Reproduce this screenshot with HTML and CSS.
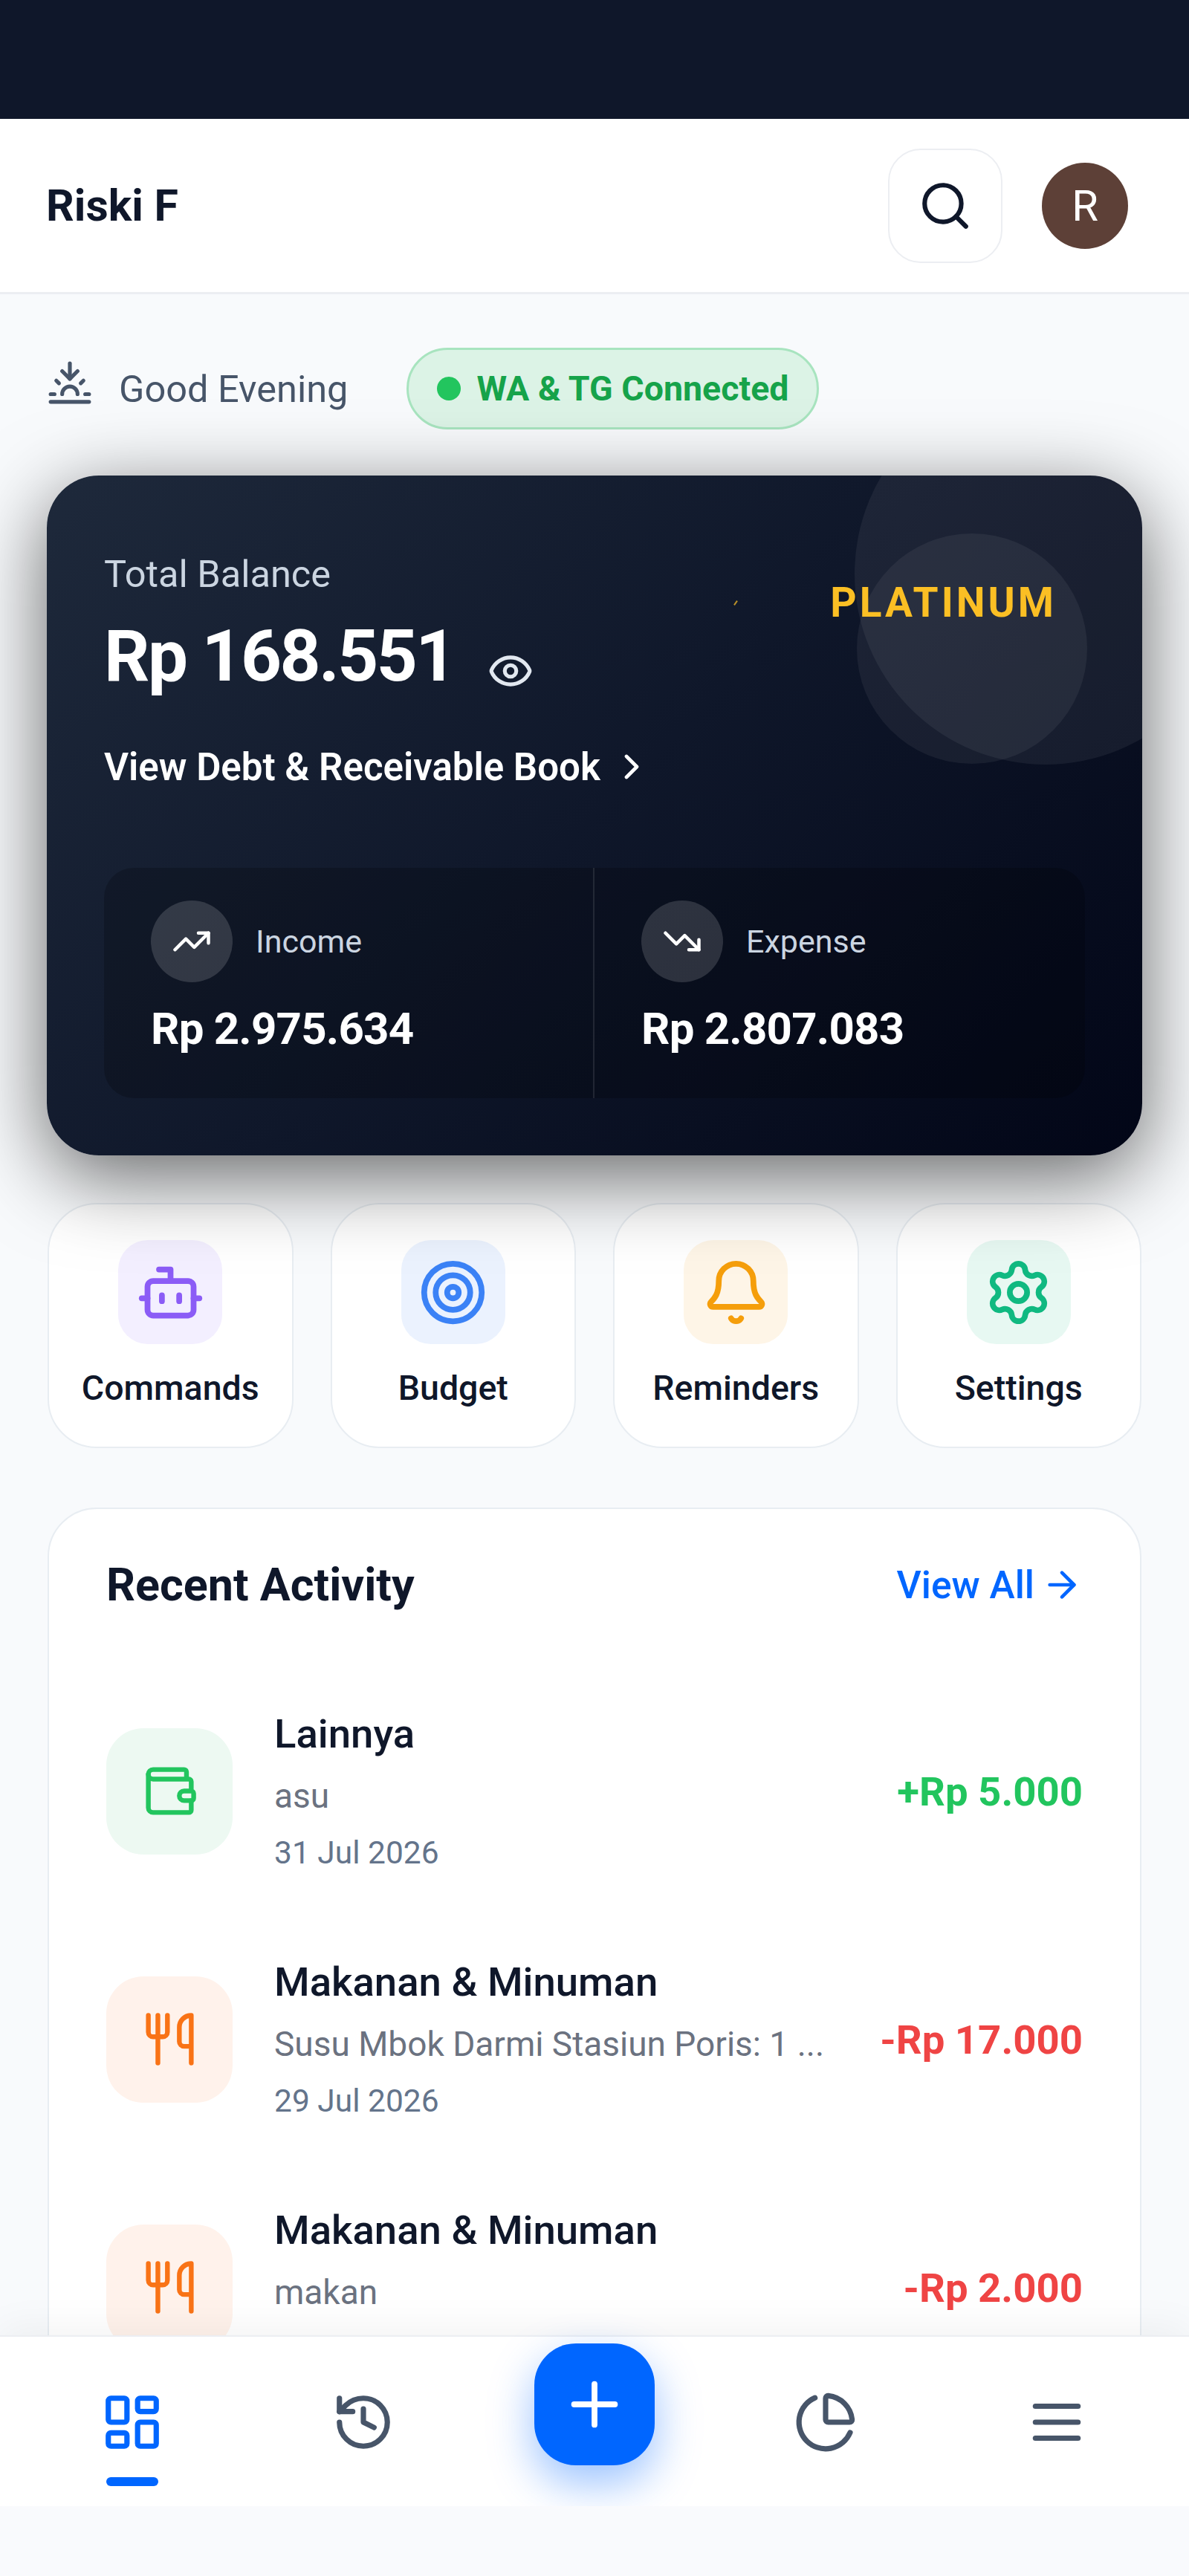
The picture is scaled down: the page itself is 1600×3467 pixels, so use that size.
FILE: index.html
```html
<!DOCTYPE html>
<html lang="en">

<head>
    <meta charset="UTF-8">
    <meta name="viewport" content="width=device-width, initial-scale=1.0">
    <title>Riski F - Dashboard</title>
    <link rel="stylesheet" href="styles.css">
</head>

<body>
    <div class="status-bar"></div>

    <header class="app-header">
        <div class="user-name">Riski F</div>
        <div class="header-right">
            <button class="search-btn">
                <svg class="icon search-icon" viewBox="0 0 24 24"><path d="m21 21-4.34-4.34"/><circle cx="11" cy="11" r="8"/></svg>
            </button>
            <div class="avatar">R</div>
        </div>
    </header>

    <main class="content">
        <div class="greeting">
            <svg class="icon sunset-icon" viewBox="0 0 24 24"><path d="M12 10V2"/><path d="m4.93 10.93 1.41 1.41"/><path d="M2 18h2"/><path d="M20 18h2"/><path d="m19.07 10.93-1.41 1.41"/><path d="M22 22H2"/><path d="m16 6-4 4-4-4"/><path d="M16 18a4 4 0 0 0-8 0"/></svg>
            <span class="greeting-text">Good Evening</span>
            <div class="connected-pill"><span class="dot"></span>WA &amp; TG Connected</div>
        </div>

        <section class="hero">
            <span class="circle circle-big"></span>
            <span class="circle circle-small"></span>
            <span class="speck"></span>

            <div class="hero-top">
                <div>
                    <div class="balance-label">Total Balance</div>
                    <div class="balance-row">
                        <span class="balance">Rp 168.551</span>
                        <svg class="icon eye-icon" viewBox="0 0 24 24"><path d="M2.062 12.348a1 1 0 0 1 0-.696 10.75 10.75 0 0 1 19.876 0 1 1 0 0 1 0 .696 10.75 10.75 0 0 1-19.876 0"/><circle cx="12" cy="12" r="3"/></svg>
                    </div>
                </div>
                <div class="tier">PLATINUM</div>
            </div>

            <div class="debt-link">
                View Debt &amp; Receivable Book
                <svg class="icon chevron-icon" viewBox="0 0 24 24"><path d="m9 18 6-6-6-6"/></svg>
            </div>

            <div class="stats">
                <div class="stat">
                    <div class="stat-head">
                        <span class="stat-icon">
                            <svg class="icon" viewBox="0 0 24 24"><path d="M16 7h6v6"/><path d="m22 7-8.5 8.5-5-5L2 17"/></svg>
                        </span>
                        Income
                    </div>
                    <div class="stat-value">Rp 2.975.634</div>
                </div>
                <div class="stat">
                    <div class="stat-head">
                        <span class="stat-icon">
                            <svg class="icon" viewBox="0 0 24 24"><path d="M16 17h6v-6"/><path d="m22 17-8.5-8.5-5 5L2 7"/></svg>
                        </span>
                        Expense
                    </div>
                    <div class="stat-value">Rp 2.807.083</div>
                </div>
            </div>
        </section>

        <section class="actions">
            <div class="action">
                <span class="action-icon purple">
                    <svg class="icon" viewBox="0 0 24 24"><path d="M12 8V4H8"/><rect width="16" height="12" x="4" y="8" rx="2"/><path d="M2 14h2"/><path d="M20 14h2"/><path d="M15 13v2"/><path d="M9 13v2"/></svg>
                </span>
                Commands
            </div>
            <div class="action">
                <span class="action-icon blue">
                    <svg class="icon" viewBox="0 0 24 24"><circle cx="12" cy="12" r="10"/><circle cx="12" cy="12" r="6"/><circle cx="12" cy="12" r="2"/></svg>
                </span>
                Budget
            </div>
            <div class="action">
                <span class="action-icon amber">
                    <svg class="icon" viewBox="0 0 24 24"><path d="M10.268 21a2 2 0 0 0 3.464 0"/><path d="M3.262 15.326A1 1 0 0 0 4 17h16a1 1 0 0 0 .74-1.673C19.41 13.956 18 12.499 18 8A6 6 0 0 0 6 8c0 4.499-1.411 5.956-2.738 7.326"/></svg>
                </span>
                Reminders
            </div>
            <div class="action">
                <span class="action-icon green">
                    <svg class="icon" viewBox="0 0 24 24"><path d="M9.671 4.136a2.34 2.34 0 0 1 4.659 0 2.34 2.34 0 0 0 3.319 1.915 2.34 2.34 0 0 1 2.33 4.033 2.34 2.34 0 0 0 0 3.831 2.34 2.34 0 0 1-2.33 4.033 2.34 2.34 0 0 0-3.319 1.915 2.34 2.34 0 0 1-4.659 0 2.34 2.34 0 0 0-3.32-1.915 2.34 2.34 0 0 1-2.33-4.033 2.34 2.34 0 0 0 0-3.831A2.34 2.34 0 0 1 6.35 6.051a2.34 2.34 0 0 0 3.319-1.915"/><circle cx="12" cy="12" r="3"/></svg>
                </span>
                Settings
            </div>
        </section>

        <section class="recent">
            <div class="recent-head">
                <h2>Recent Activity</h2>
                <div class="view-all">
                    View All
                    <svg class="icon" viewBox="0 0 24 24"><path d="M5 12h14"/><path d="m12 5 7 7-7 7"/></svg>
                </div>
            </div>

            <div class="tx">
                <span class="tx-icon wallet">
                    <svg class="icon" viewBox="0 0 24 24"><path d="M19 7V4a1 1 0 0 0-1-1H5a2 2 0 0 0 0 4h15a1 1 0 0 1 1 1v4h-3a2 2 0 0 0 0 4h3a1 1 0 0 0 1-1v-2a1 1 0 0 0-1-1"/><path d="M3 5v14a2 2 0 0 0 2 2h15a1 1 0 0 0 1-1v-4"/></svg>
                </span>
                <div class="tx-body">
                    <div class="tx-title">Lainnya</div>
                    <div class="tx-note">asu</div>
                    <div class="tx-date">31 Jul 2026</div>
                </div>
                <div class="tx-amount plus">+Rp 5.000</div>
            </div>

            <div class="tx">
                <span class="tx-icon food">
                    <svg class="icon" viewBox="0 0 24 24"><path d="M3 2v7c0 1.1.9 2 2 2h4a2 2 0 0 0 2-2V2"/><path d="M7 2v20"/><path d="M21 15V2a5 5 0 0 0-5 5v6c0 1.1.9 2 2 2h3Zm0 0v7"/></svg>
                </span>
                <div class="tx-body">
                    <div class="tx-title">Makanan &amp; Minuman</div>
                    <div class="tx-note">Susu Mbok Darmi Stasiun Poris: 1 ...</div>
                    <div class="tx-date">29 Jul 2026</div>
                </div>
                <div class="tx-amount minus">-Rp 17.000</div>
            </div>

            <div class="tx">
                <span class="tx-icon food">
                    <svg class="icon" viewBox="0 0 24 24"><path d="M3 2v7c0 1.1.9 2 2 2h4a2 2 0 0 0 2-2V2"/><path d="M7 2v20"/><path d="M21 15V2a5 5 0 0 0-5 5v6c0 1.1.9 2 2 2h3Zm0 0v7"/></svg>
                </span>
                <div class="tx-body">
                    <div class="tx-title">Makanan &amp; Minuman</div>
                    <div class="tx-note">makan</div>
                </div>
                <div class="tx-amount minus">-Rp 2.000</div>
            </div>
        </section>
    </main>

    <nav class="bottom-nav">
        <div class="nav-item active">
            <svg class="icon" viewBox="0 0 24 24"><rect width="7" height="9" x="3" y="3" rx="1"/><rect width="7" height="5" x="14" y="3" rx="1"/><rect width="7" height="9" x="14" y="12" rx="1"/><rect width="7" height="5" x="3" y="16" rx="1"/></svg>
            <span class="nav-bar"></span>
        </div>
        <div class="nav-item">
            <svg class="icon" viewBox="0 0 24 24"><path d="M3 12a9 9 0 1 0 9-9 9.75 9.75 0 0 0-6.74 2.74L3 8"/><path d="M3 3v5h5"/><path d="M12 7v5l4 2"/></svg>
        </div>
        <div class="nav-item">
            <button class="fab">
                <svg class="icon" viewBox="0 0 24 24"><path d="M5 12h14"/><path d="M12 5v14"/></svg>
            </button>
        </div>
        <div class="nav-item">
            <svg class="icon" viewBox="0 0 24 24"><path d="M21 12c.552 0 1.005-.449.95-.998a10 10 0 0 0-8.953-8.951c-.55-.055-.998.398-.998.95v8a1 1 0 0 0 1 1z"/><path d="M21.21 15.89A10 10 0 1 1 8 2.83"/></svg>
        </div>
        <div class="nav-item">
            <svg class="icon" viewBox="0 0 24 24"><path d="M4 12h16"/><path d="M4 18h16"/><path d="M4 6h16"/></svg>
        </div>
    </nav>

    <div class="safe-area"></div>
</body>

</html>
```

FILE: styles.css
```css
* {
    box-sizing: border-box;
}

html,
body {
    margin: 0;
    height: 3467px;
    overflow: hidden;
}

body {
    font-family: Roboto, "Liberation Sans", sans-serif;
    background: #f8fafc;
    color: #0f172a;
    display: flex;
    flex-direction: column;
}

.icon {
    fill: none;
    stroke: currentColor;
    stroke-width: 2;
    stroke-linecap: round;
    stroke-linejoin: round;
    flex: none;
    display: block;
}

.status-bar {
    height: 160px;
    background: #0f172a;
    flex: none;
}

/* header */
.app-header {
    height: 236px;
    flex: none;
    display: flex;
    align-items: center;
    justify-content: space-between;
    padding: 0 82px 0 62px;
    background: white;
    border-bottom: 3px solid #eceef2;
}

.user-name {
    font-size: 59px;
    font-weight: 700;
}

.header-right {
    display: flex;
    align-items: center;
    gap: 53px;
}

.search-btn {
    width: 154px;
    height: 154px;
    padding: 0;
    border: 2px solid #eceef2;
    border-radius: 44px;
    background: white;
    color: #0f172a;
    display: flex;
    align-items: center;
    justify-content: center;
}

.search-icon {
    width: 74px;
    height: 74px;
}

.avatar {
    width: 116px;
    height: 116px;
    border-radius: 50%;
    background: #5d4037;
    color: white;
    font-size: 58px;
    display: flex;
    align-items: center;
    justify-content: center;
}

/* scrolling area */
.content {
    flex: none;
    height: 2747px;
    overflow: hidden;
    padding: 72px 63px 0;
}

.greeting {
    display: flex;
    align-items: center;
    height: 110px;
}

.sunset-icon {
    width: 62px;
    height: 62px;
    margin-bottom: 16px;
    color: #475569;
}

.greeting-text {
    margin-left: 35px;
    font-size: 50.5px;
    color: #475569;
}

.connected-pill {
    margin-left: 79px;
    height: 110px;
    padding: 0 38px;
    display: flex;
    align-items: center;
    gap: 21px;
    border: 3px solid #a8e4bf;
    border-radius: 55px;
    background: #dcf3e6;
    color: #16a34a;
    font-size: 46.5px;
    font-weight: 700;
}

.dot {
    width: 32px;
    height: 32px;
    border-radius: 50%;
    background: #22c55e;
}

/* balance card */
.hero {
    position: relative;
    z-index: 1;
    height: 915px;
    margin-top: 62px;
    padding: 105px 77px 77px;
    border-radius: 70px;
    overflow: hidden;
    color: white;
    background: linear-gradient(135deg, #1e293b 0%, #0f172a 50%, #020617 100%);
    box-shadow: 0 28px 110px rgba(0, 0, 0, 0.6);
}

.circle {
    position: absolute;
    border-radius: 50%;
    background: rgba(255, 255, 255, 0.06);
}

.circle-big {
    width: 514px;
    height: 514px;
    left: 1087px;
    top: -125px;
}

.circle-small {
    width: 310px;
    height: 310px;
    left: 1090px;
    top: 78px;
}

.speck {
    position: absolute;
    left: 926px;
    top: 168px;
    width: 2px;
    height: 7px;
    background: #b8902a;
    transform: rotate(35deg);
}

.hero-top {
    position: relative;
    display: flex;
    justify-content: space-between;
    align-items: flex-start;
}

.balance-label {
    font-size: 50.5px;
    line-height: 56px;
    color: #cbd5e1;
}

.balance-row {
    display: flex;
    align-items: flex-start;
    margin-top: 26px;
}

.balance {
    font-size: 96px;
    line-height: 112px;
    font-weight: 700;
    letter-spacing: -2.6px;
}

.eye-icon {
    width: 62px;
    height: 62px;
    margin: 45px 0 0 44px;
    color: #e2e8f0;
}

.tier {
    margin: 34px 38px 0 0;
    font-size: 55px;
    line-height: 64px;
    font-weight: 700;
    letter-spacing: 4px;
    color: #fbbf24;
}

.debt-link {
    position: relative;
    display: flex;
    align-items: center;
    gap: 14px;
    height: 60px;
    margin-top: 63px;
    font-size: 51px;
    font-weight: 600;
}

.chevron-icon {
    width: 56px;
    height: 56px;
}

.stats {
    position: relative;
    display: grid;
    grid-template-columns: 1fr 1fr;
    height: 310px;
    margin-top: 106px;
    border-radius: 40px;
    background: rgba(0, 0, 0, 0.2);
}

.stat {
    padding: 44px 63px;
}

.stat:first-child {
    border-right: 2px solid rgba(255, 255, 255, 0.1);
}

.stat-head {
    display: flex;
    align-items: center;
    gap: 31px;
    font-size: 43px;
    color: #cbd5e1;
}

.stat-icon {
    width: 110px;
    height: 110px;
    border-radius: 50%;
    background: rgba(255, 255, 255, 0.15);
    color: white;
    display: flex;
    align-items: center;
    justify-content: center;
}

.stat-icon .icon {
    width: 54px;
    height: 54px;
}

.stat-value {
    margin-top: 28px;
    font-size: 60px;
    line-height: 70px;
    font-weight: 700;
    letter-spacing: -0.8px;
}

/* quick actions */
.actions {
    display: grid;
    grid-template-columns: repeat(4, 1fr);
    gap: 50px;
    margin: 64px 1px 0;
}

.action {
    height: 330px;
    padding-top: 48px;
    display: flex;
    flex-direction: column;
    align-items: center;
    border: 2px solid #e8edf2;
    border-radius: 66px;
    background: white;
    font-size: 46.5px;
    font-weight: 500;
}

.action-icon {
    width: 140px;
    height: 140px;
    margin-bottom: 32px;
    border-radius: 40px;
    display: flex;
    align-items: center;
    justify-content: center;
}

.action-icon .icon {
    width: 93px;
    height: 93px;
}

.purple {
    background: #f3efff;
    color: #8b5cf6;
}

.blue {
    background: #ebf2fe;
    color: #3b82f6;
}

.amber {
    background: #fef5e7;
    color: #f59e0b;
}

.green {
    background: #e7f8f2;
    color: #10b981;
}

/* recent activity */
.recent {
    margin: 80px 1px 0;
    padding: 66px 77px 0;
    border: 2px solid #e8edf2;
    border-radius: 66px;
    background: white;
}

.recent-head {
    display: flex;
    align-items: center;
    justify-content: space-between;
    height: 72px;
    margin-bottom: 133px;
}

h2 {
    margin: 0;
    font-size: 61px;
    font-weight: 700;
}

.view-all {
    display: flex;
    align-items: center;
    gap: 9px;
    font-size: 51.5px;
    font-weight: 500;
    color: #0066ff;
}

.view-all .icon {
    width: 56px;
    height: 56px;
}

.tx {
    display: flex;
    align-items: center;
    margin-bottom: 117px;
}

.tx-icon {
    width: 170px;
    height: 170px;
    border-radius: 50px;
    display: flex;
    align-items: center;
    justify-content: center;
}

.tx-icon .icon {
    width: 77px;
    height: 77px;
}

.wallet {
    background: #edf9f2;
    color: #22c55e;
}

.food {
    background: #fff2eb;
    color: #f97316;
}

.tx-body {
    flex: 1;
    min-height: 217px;
    margin-left: 56px;
    min-width: 0;
}

.tx-title {
    font-size: 54.5px;
    line-height: 62px;
    font-weight: 500;
}

.tx-note {
    margin-top: 26px;
    font-size: 46px;
    line-height: 54px;
    color: #6b7280;
    white-space: nowrap;
}

.tx-date {
    margin-top: 25px;
    font-size: 42.5px;
    line-height: 50px;
    color: #64748b;
}

.tx-amount {
    font-size: 54.5px;
    font-weight: 700;
    white-space: nowrap;
}

.plus {
    color: #22c55e;
}

.minus {
    color: #ef4444;
}

/* bottom nav */
.bottom-nav {
    position: relative;
    z-index: 2;
    flex: none;
    height: 230px;
    padding: 72px 23px 0;
    display: grid;
    grid-template-columns: repeat(5, 1fr);
    background: white;
    border-top: 2px solid #eceef2;
    box-shadow: 0 -10px 50px rgba(0, 0, 0, 0.05);
    color: #475569;
}

.nav-item {
    display: flex;
    flex-direction: column;
    align-items: center;
}

.nav-item .icon {
    width: 86px;
    height: 86px;
}

.nav-item.active {
    color: #0066ff;
}

.nav-bar {
    width: 70px;
    height: 12px;
    margin-top: 31px;
    border-radius: 6px;
    background: #0066ff;
}

.fab {
    width: 162px;
    height: 164px;
    margin-top: -63px;
    padding: 0;
    border: none;
    border-radius: 56px;
    background: #0066ff;
    color: white;
    box-shadow: 0 24px 60px rgba(0, 102, 255, 0.4);
    display: flex;
    align-items: center;
    justify-content: center;
}

.nav-item .fab .icon {
    width: 94px;
    height: 94px;
}

.safe-area {
    position: relative;
    z-index: 3;
    flex: 1;
    background: #f9fafd;
}
```
